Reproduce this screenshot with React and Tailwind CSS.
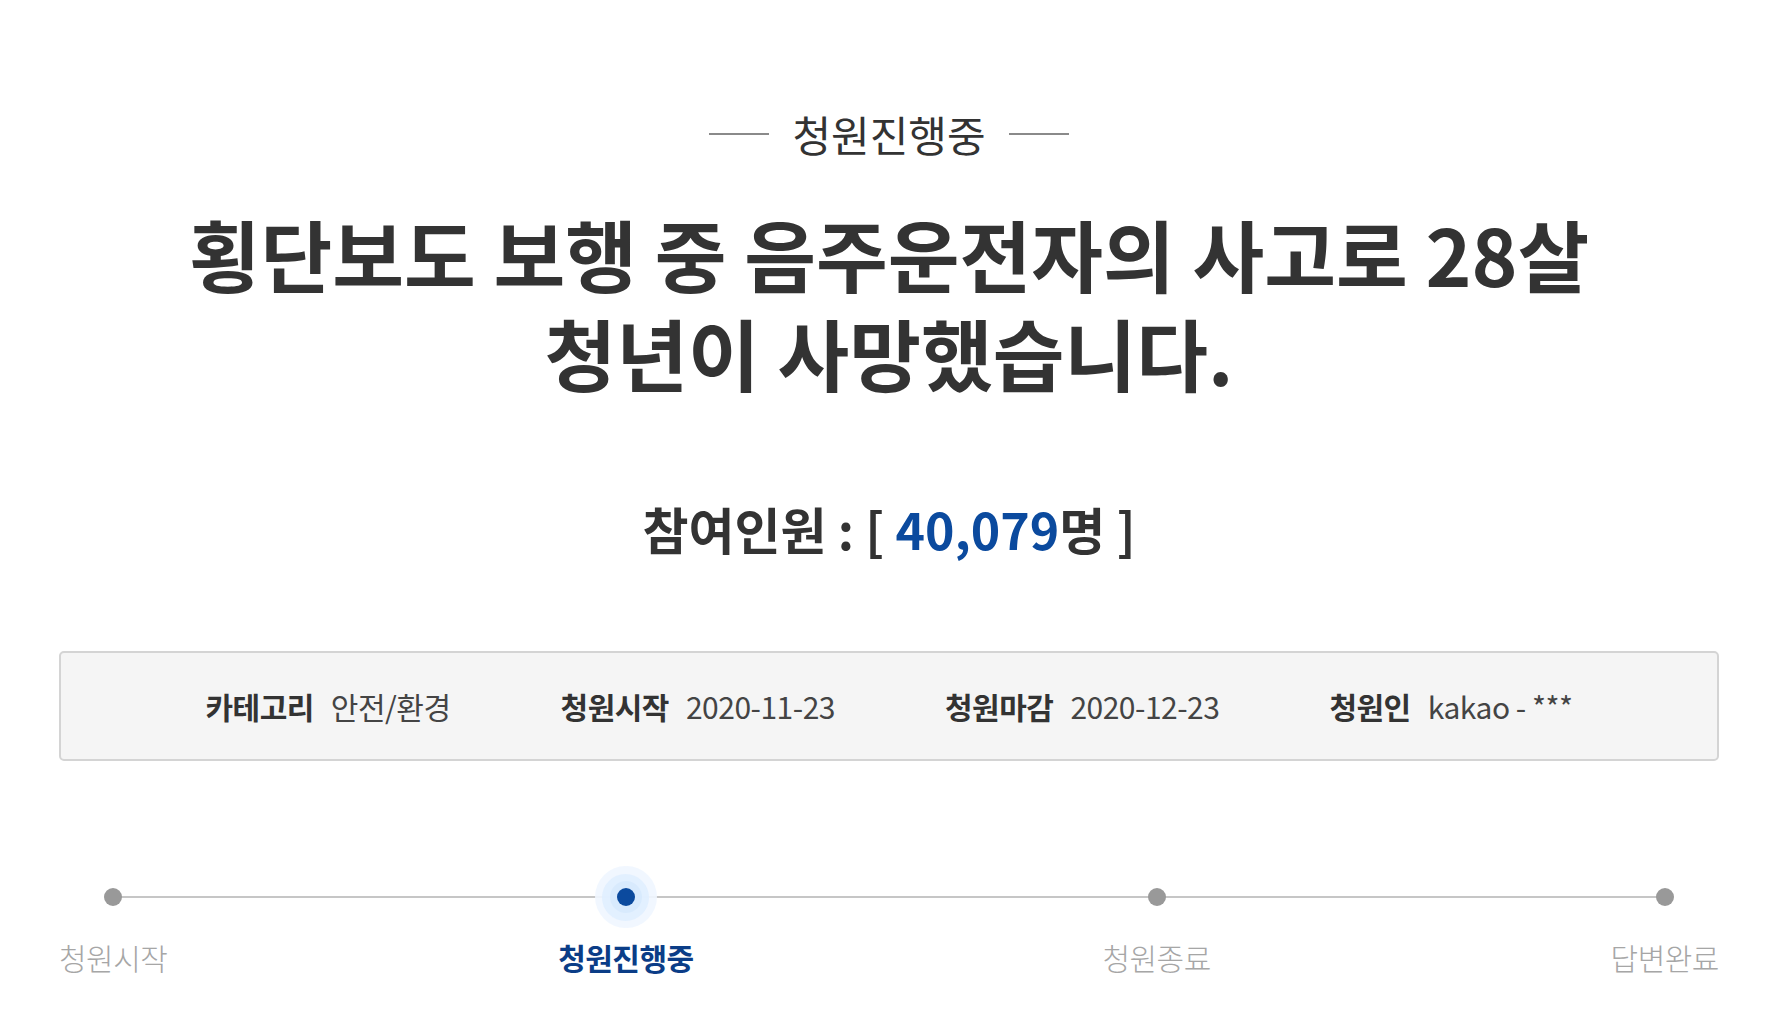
import React from "react";

const font = {
  fontFamily: '"Noto Sans CJK KR", "Noto Sans", sans-serif',
};

const info = [
  { label: "카테고리", value: "안전/환경" },
  { label: "청원시작", value: "2020-11-23" },
  { label: "청원마감", value: "2020-12-23" },
  { label: "청원인", value: "kakao - ***" },
];

const steps = [
  { name: "청원시작", active: false },
  { name: "청원진행중", active: true },
  { name: "청원종료", active: false },
  { name: "답변완료", active: false },
];

const App = () => {
  return (
    <div className="min-h-screen bg-white text-[#333]" style={font}>
      <div className="w-[1660px] mx-auto pt-[110px]">
        {/* status */}
        <div className="flex items-center justify-center gap-[23px]">
          <span className="w-[60px] h-[2px] bg-[#8a8a8a]" />
          <p className="text-[42px] leading-[48px] tracking-[0px] text-[#333]">
            청원진행중
          </p>
          <span className="w-[60px] h-[2px] bg-[#8a8a8a]" />
        </div>

        {/* title */}
        <h1 className="mt-[46px] text-center text-[78px] leading-[99px] font-bold tracking-[0px] text-[#333]">
          횡단보도 보행 중 음주운전자의 사고로 28살
          <br />
          청년이 사망했습니다.
        </h1>

        {/* count */}
        <p className="mt-[96px] text-center text-[50px] leading-[60px] font-bold tracking-[0px] text-[#333]">
          참여인원 : [ <span className="text-[#0b4a9e]">40,079</span>명 ]
        </p>

        {/* info box */}
        <div className="mt-[93px] h-[110px] rounded-[5px] border-2 border-[#d4d4d4] bg-[#f5f5f5] flex items-center justify-center gap-[110px]">
          {info.map((item, index) => (
            <div className="flex items-center gap-[17px]" key={index}>
              <span className="text-[30px] font-bold tracking-[-0.5px] text-[#333]">
                {item.label}
              </span>
              <span className="text-[30px] tracking-[-0.5px] text-[#444]">
                {item.value}
              </span>
            </div>
          ))}
        </div>

        {/* progress */}
        <div className="relative mt-[105px] flex justify-between">
          <div className="absolute left-[54px] right-[54px] top-[30px] h-[2px] bg-[#c6c6c6]" />
          {steps.map((step, index) => (
            <div
              className={
                step.active
                  ? "relative flex flex-col items-center -ml-[9px] mr-[9px]"
                  : "relative flex flex-col items-center"
              }
              key={index}
            >
              <div className="w-[62px] h-[62px] flex items-center justify-center">
                {step.active ? (
                  <div className="w-[62px] h-[62px] rounded-full bg-[#eff6ff]/90 flex items-center justify-center">
                    <div className="w-[47px] h-[47px] rounded-full bg-[#e0eeff]/90 flex items-center justify-center">
                      <div className="w-[32px] h-[32px] rounded-full bg-[#d6e8fd]/80 flex items-center justify-center">
                        <div className="w-[18px] h-[18px] rounded-full bg-[#0b4a9e]" />
                      </div>
                    </div>
                  </div>
                ) : (
                  <div className="w-[18px] h-[18px] rounded-full bg-[#999]" />
                )}
              </div>
              <p
                className={
                  step.active
                    ? "mt-[11px] text-[30px] leading-[36px] font-bold tracking-[-0.5px] text-[#0b3d87]"
                    : "mt-[11px] text-[30px] leading-[36px] font-light tracking-[-0.5px] text-[#a6a6a6]"
                }
              >
                {step.name}
              </p>
            </div>
          ))}
        </div>
      </div>
    </div>
  );
};

export default App;
